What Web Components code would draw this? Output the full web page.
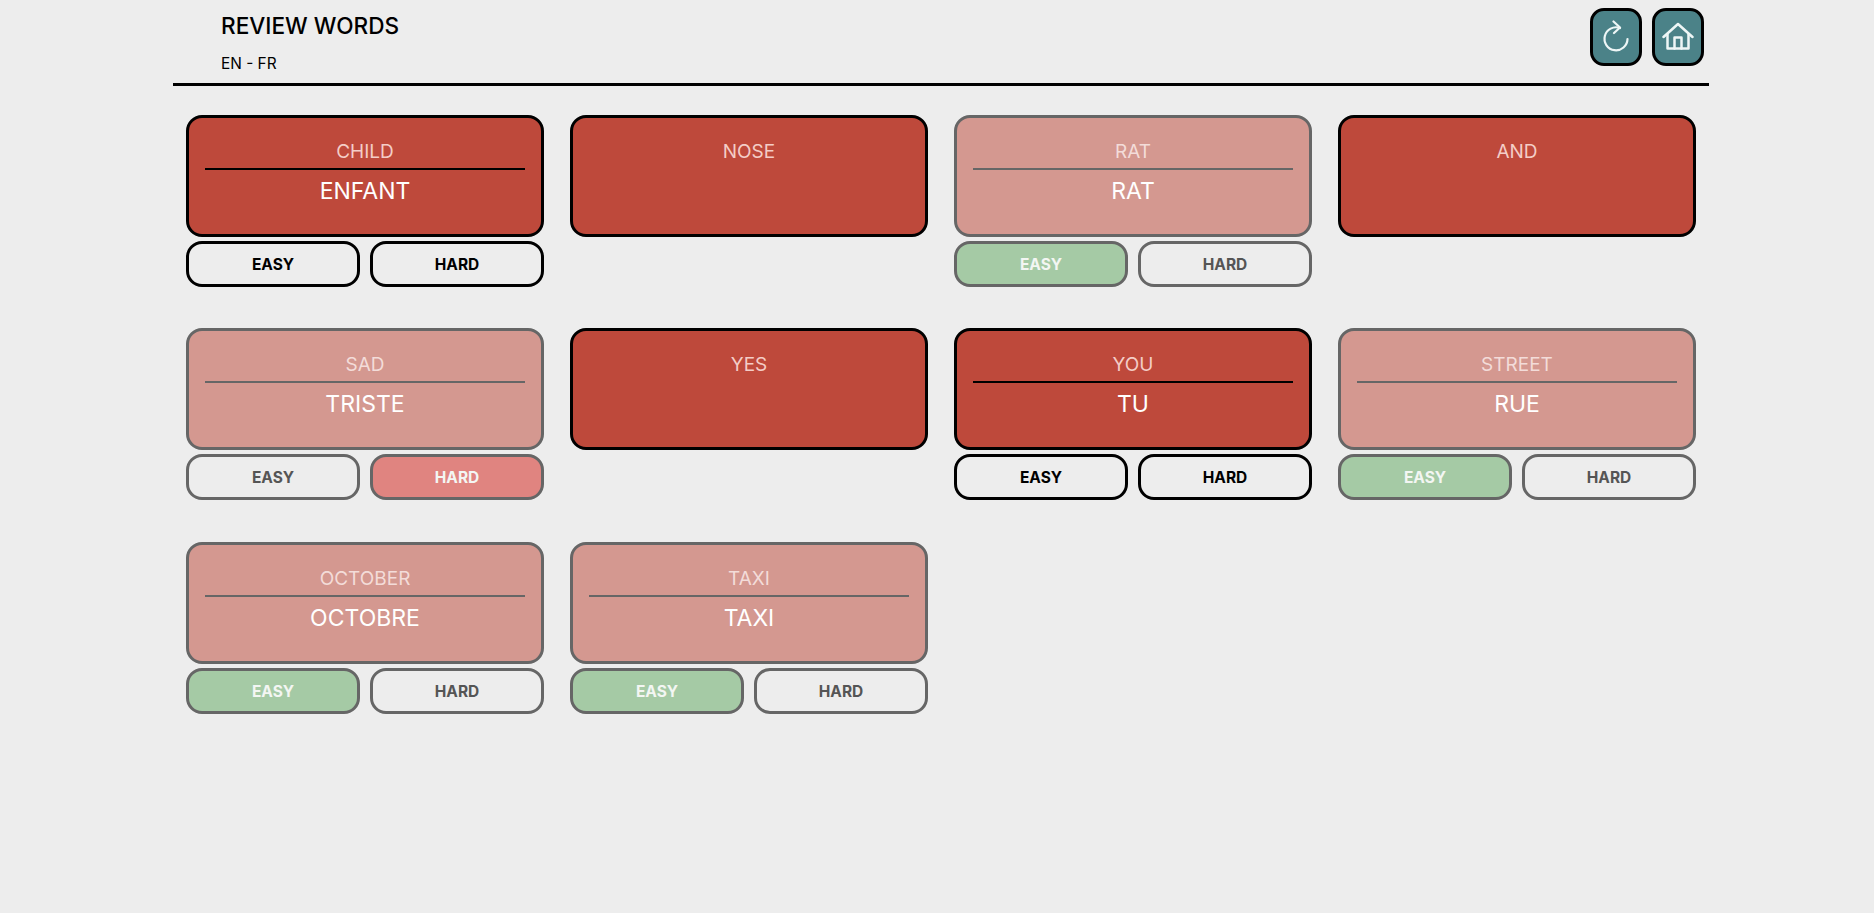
<!DOCTYPE html>
<html>
<head>
<meta charset="utf-8">
<title>Review words</title>
<style>
  html, body { margin: 0; height: 100%; background: #ededed; }
  body { font-family: Inter, Roboto, "Liberation Sans", sans-serif; }
</style>
</head>
<body>
<template id="header-tpl">
  <style>
    :host { display: flex; width: 1536px; height: 86px; box-sizing: border-box; margin-left: 173px; border-bottom: 3px solid #000; justify-content: space-between; }
    .titles { padding: 12px 0 0 48px; color: #000; }
    h1 { margin: 0; font-size: 22.6px; line-height: 28px; font-weight: 500; }
    p { margin: 14px 0 0; font-size: 15.4px; line-height: 19px; }
    .actions { display: flex; gap: 10px; padding: 8px 5px 0 0; }
  </style>
  <div class="titles">
    <h1><slot name="title"></slot></h1>
    <p><slot name="sub"></slot></p>
  </div>
  <div class="actions"><slot></slot></div>
</template>

<template id="icon-tpl">
  <style>
    :host { display: flex; width: 52px; height: 58px; box-sizing: border-box; border: 3px solid #000; border-radius: 14px; background: #4b8288; align-items: center; justify-content: center; }
    ::slotted(svg) { display: block; }
  </style>
  <slot></slot>
</template>

<template id="grid-tpl">
  <style>
    :host { display: grid; grid-template-columns: repeat(4, 358px); grid-template-rows: 213px 214px auto; column-gap: 26px; padding: 29px 0 0 186px; align-items: start; }
  </style>
  <slot></slot>
</template>

<template id="card-tpl">
  <style>
    :host { display: block; color: #fff; }
    .card { height: 122px; box-sizing: border-box; border: 3px solid #000; border-radius: 16px; background: #be493b; text-align: center; padding: 22px 16px 0; }
    .en { font-size: 19px; line-height: 23px; color: #f4cdc7; height: 23px; }
    .rule { height: 1.5px; background: #000; margin-top: 5px; }
    .fr { font-size: 23px; line-height: 28px; margin-top: 7px; }
    .btns { display: grid; grid-template-columns: 1fr 1fr; gap: 10px; margin-top: 4px; }
    :host(:not([fr])) .rule, :host(:not([fr])) .fr, :host(:not([fr])) .btns { display: none; }
  </style>
  <div class="card">
    <div class="en" id="en"></div>
    <div class="rule"></div>
    <div class="fr" id="fr"></div>
  </div>
  <div class="btns">
    <word-btn id="easy">EASY</word-btn>
    <word-btn id="hard">HARD</word-btn>
  </div>
</template>

<template id="btn-tpl">
  <style>
    :host { display: block; height: 46px; box-sizing: border-box; border: 3px solid var(--edge, #000); border-radius: 16px; background: #ededed; color: #000; text-align: center; font-size: 15.5px; line-height: 41px; font-weight: 700; }
    :host([tone="easy"]) { background: #a5caa5; color: #f0f7f0; }
    :host([tone="hard"]) { background: #e08480; color: #fdf3f2; }
    :host([dim]) { color: #555; }
    :host([tone][dim]) { color: #f3f6f3; }
  </style>
  <slot></slot>
</template>

<script>
  // Every element just clones its template into an open shadow root
  class Stamped extends HTMLElement {
    constructor() {
      super();
      this.attachShadow({ mode: "open" });
      const tpl = document.getElementById(this.constructor.tpl);
      this.shadowRoot.appendChild(tpl.content.cloneNode(true));
    }
  }

  class ReviewHeader extends Stamped { static tpl = "header-tpl"; }
  class IconButton extends Stamped { static tpl = "icon-tpl"; }
  class WordGrid extends Stamped { static tpl = "grid-tpl"; }
  class WordBtn extends Stamped { static tpl = "btn-tpl"; }

  class WordCard extends Stamped {
    static tpl = "card-tpl";

    connectedCallback() {
      const en = this.getAttribute("en");
      const fr = this.getAttribute("fr");
      const picked = this.getAttribute("picked");
      const root = this.shadowRoot;
      root.getElementById("en").textContent = en;
      root.getElementById("fr").textContent = fr || "";

      // Reviewed cards are washed out, the picked button keeps its colour
      const dim = this.hasAttribute("faded");
      const card = root.querySelector(".card");
      const easy = root.getElementById("easy");
      const hard = root.getElementById("hard");
      if (dim) {
        card.style.background = "#d49890";
        card.style.borderColor = "#666";
        root.querySelector(".rule").style.background = "#666";
        root.querySelector(".en").style.color = "#f3dcd9";
        for (const b of [easy, hard]) {
          b.setAttribute("dim", "");
          b.style.setProperty("--edge", "#666");
        }
      }
      if (picked) root.getElementById(picked).setAttribute("tone", picked);
    }
  }

  customElements.define("review-header", ReviewHeader);
  customElements.define("icon-button", IconButton);
  customElements.define("word-grid", WordGrid);
  customElements.define("word-btn", WordBtn);
  customElements.define("word-card", WordCard);
</script>

<review-header>
  <span slot="title">REVIEW WORDS</span>
  <span slot="sub">EN - FR</span>
  <icon-button>
    <svg width="30" height="34" viewBox="0 0 30 34" fill="none" stroke="#eef6f6" stroke-width="2.2" stroke-linecap="round" stroke-linejoin="round">
      <path d="M19 8a11.5 11.5 0 1 0 7.5 11"/>
      <path d="M12.5 1.5L19 7.5L13 13"/>
    </svg>
  </icon-button>
  <icon-button>
    <svg width="32" height="30" viewBox="0 0 32 30" fill="none" stroke="#eef6f6" stroke-width="2.5" stroke-linecap="round" stroke-linejoin="round">
      <path d="M1.5 15L16 2l14.5 13"/>
      <path d="M5.5 12v14.5h21V12"/>
      <path d="M12.5 26.5V15.5h7v11"/>
    </svg>
  </icon-button>
</review-header>

<word-grid>
  <word-card en="CHILD" fr="ENFANT"></word-card>
  <word-card en="NOSE"></word-card>
  <word-card en="RAT" fr="RAT" faded picked="easy"></word-card>
  <word-card en="AND"></word-card>
  <word-card en="SAD" fr="TRISTE" faded picked="hard"></word-card>
  <word-card en="YES"></word-card>
  <word-card en="YOU" fr="TU"></word-card>
  <word-card en="STREET" fr="RUE" faded picked="easy"></word-card>
  <word-card en="OCTOBER" fr="OCTOBRE" faded picked="easy"></word-card>
  <word-card en="TAXI" fr="TAXI" faded picked="easy"></word-card>
</word-grid>
</body>
</html>
